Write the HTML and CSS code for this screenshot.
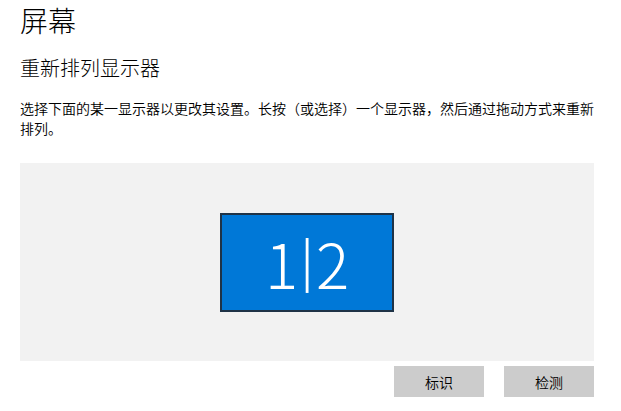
FILE: index.html
```html
<!DOCTYPE html>
<html lang="zh-CN">
<head>
    <meta charset="UTF-8">
    <meta name="viewport" content="width=device-width, initial-scale=1.0">
    <title>屏幕</title>
    <link rel="stylesheet" href="styles.css">
</head>
<body>

    <h1 class="page-title">屏幕</h1>

    <h2 class="section-title">重新排列显示器</h2>
    <p class="hint">选择下面的某一显示器以更改其设置。长按（或选择）一个显示器，然后通过拖动方式来重新排列。</p>

    <!-- 显示器排列区域 -->
    <div class="arrange-area">
        <div class="monitor">1<span class="sep">|</span>2</div>
    </div>

    <div class="actions">
        <button type="button" class="btn">标识</button>
        <button type="button" class="btn">检测</button>
    </div>

</body>
</html>
```

FILE: styles.css
```css
/* 基本样式 */
body {
    font-family: "Noto Sans CJK SC", "Liberation Sans", sans-serif;
    margin: 0;
    padding: 0 27px 0 20px;
    background-color: #fff;
    color: #000;
}

.page-title {
    font-size: 28px;
    font-weight: 300;
    line-height: 40px;
    margin: 0;
}

.section-title {
    font-size: 20px;
    font-weight: 300;
    line-height: 28px;
    margin: 14px 0 0 0;
}

.hint {
    font-size: 14px;
    font-weight: 350;
    line-height: 20px;
    margin: 16px 0 0 0;
}

/* 显示器排列区域 */
.arrange-area {
    margin-top: 25px;
    height: 198px;
    background-color: #f2f2f2;
    display: flex;
    align-items: center;
    justify-content: center;
}

.monitor {
    box-sizing: border-box;
    width: 174px;
    height: 99px;
    border: 2px solid #1f3347;
    background-color: #0078d7;
    color: #fff;
    font-size: 62px;
    font-weight: 200;
    line-height: 1;
    display: flex;
    align-items: center;
    justify-content: center;
}

.monitor .sep {
    display: inline-block;
    margin: 0 1px;
    transform: scaleY(0.8) translateY(-6px);
}

.actions {
    display: flex;
    justify-content: flex-end;
    gap: 20px;
    margin-top: 5px;
}

.btn {
    width: 90px;
    height: 31px;
    border: none;
    background-color: #cccccc;
    font-family: inherit;
    font-size: 14px;
    font-weight: 350;
    color: #000;
    padding: 0;
}
```
